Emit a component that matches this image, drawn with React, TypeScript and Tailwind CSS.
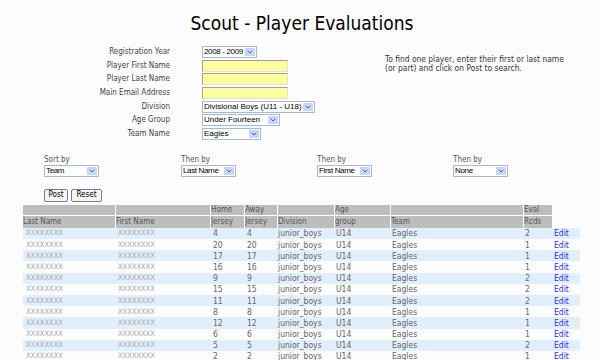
import { ChevronDown } from 'lucide-react'

const font = "font-['DejaVu_Sans_Condensed','DejaVu_Sans',sans-serif]"

function Select({ value, width, tight }: { value: string; width: string; tight?: boolean }) {
  return (
    <div className={`flex h-[12px] items-stretch border border-[#a5b9d5] bg-white ${width}`}>
      <span
        className={`flex-1 pl-[1px] font-['Liberation_Sans',Arial,sans-serif] text-[8px] leading-[10px] text-black whitespace-nowrap overflow-hidden ${tight ? 'tracking-[-0.35px]' : ''}`}
      >
        {value}
      </span>
      <span className="m-[1px] flex w-[10px] items-center justify-center bg-[#c6d6fb]">
        <ChevronDown size={8} strokeWidth={3} className="text-[#4d6185]" />
      </span>
    </div>
  )
}

function YellowInput() {
  return <div className="h-[12px] w-[86px] border border-[#a0a0a0] border-b-[#e0e0e0] border-r-[#e0e0e0] bg-[#fffd9e]" />
}

const formRows: { label: string; control: React.ReactNode }[] = [
  { label: 'Registration Year', control: <Select value="2008 - 2009" width="w-[55px]" tight /> },
  { label: 'Player First Name', control: <YellowInput /> },
  { label: 'Player Last Name', control: <YellowInput /> },
  { label: 'Main Email Address', control: <YellowInput /> },
  { label: 'Division', control: <Select value="Divisional Boys (U11 - U18)" width="w-[113px]" /> },
  { label: 'Age Group', control: <Select value="Under Fourteen" width="w-[78px]" /> },
  { label: 'Team Name', control: <Select value="Eagles" width="w-[59px]" /> },
]

const sorts = [
  { label: 'Sort by', value: 'Team', ml: 'ml-[44px]' },
  { label: 'Then by', value: 'Last Name', ml: 'ml-[82px]' },
  { label: 'Then by', value: 'First Name', ml: 'ml-[81px]' },
  { label: 'Then by', value: 'None', ml: 'ml-[81px]' },
]

const players = [
  [4, 2], [20, 1], [17, 1], [16, 1], [9, 2], [15, 2], [11, 2], [8, 1], [12, 1], [6, 1], [5, 2], [2, 1],
]

export default function App() {
  return (
    <div className={`h-[360px] w-[600px] overflow-hidden bg-[#fcfcfc] ${font}`}>
      <h1 className="pl-[4px] pt-[11px] text-center text-[19px] leading-[24px] text-black">Scout - Player Evaluations</h1>

      {/* Search form */}
      <div className="mt-[10px] flex">
        <div className="flex flex-col">
          {formRows.map((r) => (
            <div key={r.label} className="flex h-[13.7px] items-center">
              <span className="w-[171px] pr-[1px] text-right text-[8px] leading-[10px] text-[#444]">{r.label}</span>
              <span className="ml-[31px]">{r.control}</span>
            </div>
          ))}
        </div>
        <p className="ml-[70px] mt-[10px] w-[190px] text-[8.4px] leading-[9px] text-[#333]">
          To find one player, enter their first or last name (or part) and click on Post to search.
        </p>
      </div>

      {/* Sort options */}
      <div className="mt-[14px] flex">
        {sorts.map((s, i) => (
          <div key={i} className={`flex flex-col ${s.ml}`}>
            <span className="text-[8px] leading-[10px] text-[#555]">{s.label}</span>
            <Select value={s.value} width="w-[55px]" tight />
          </div>
        ))}
      </div>

      <div className="ml-[44px] mt-[12px] flex gap-[3px]">
        <button className="h-[13px] w-[24px] rounded-[2px] border border-[#6a7fa0] bg-[#f6f6f6] text-[8px] leading-[10px] text-black">Post</button>
        <button className="h-[13px] w-[31px] rounded-[2px] border border-[#6a7fa0] bg-[#f6f6f6] text-[8px] leading-[10px] text-black">Reset</button>
      </div>

      {/* Results table */}
      <table className="ml-[23px] mt-[3px] border-separate border-spacing-0 text-[8px] leading-[10px]">
        <thead className="text-[#555]">
          <tr className="h-[11px]">
            <th className="w-[93px] border-r border-b border-white bg-[#bdbdbd]" />
            <th className="w-[95px] border-r border-b border-white bg-[#bdbdbd]" />
            <th className="w-[34px] border-r border-b border-white bg-[#bdbdbd] text-left font-normal">Home</th>
            <th className="w-[33px] border-r border-b border-white bg-[#bdbdbd] text-left font-normal">Away</th>
            <th className="w-[57px] border-r border-b border-white bg-[#bdbdbd]" />
            <th className="w-[56px] border-r border-b border-white bg-[#bdbdbd] text-left font-normal">Age</th>
            <th className="w-[133px] border-r border-b border-white bg-[#bdbdbd]" />
            <th className="w-[28px] border-b border-white bg-[#bdbdbd] text-left font-normal">Eval</th>
            <th className="w-[28px]" />
          </tr>
          <tr className="h-[12px]">
            <th className="border-r border-white bg-[#bdbdbd] text-left font-normal">Last Name</th>
            <th className="border-r border-white bg-[#bdbdbd] text-left font-normal">First Name</th>
            <th className="border-r border-white bg-[#bdbdbd] text-left font-normal">Jersey</th>
            <th className="border-r border-white bg-[#bdbdbd] text-left font-normal">Jersey</th>
            <th className="border-r border-white bg-[#bdbdbd] text-left font-normal">Division</th>
            <th className="border-r border-white bg-[#bdbdbd] text-left font-normal">group</th>
            <th className="border-r border-white bg-[#bdbdbd] text-left font-normal">Team</th>
            <th className="bg-[#bdbdbd] text-left font-normal">Rcds</th>
            <th />
          </tr>
        </thead>
        <tbody className="text-[8.5px] text-[#666]">
          {players.map(([n, rcds], i) => (
            <tr key={n} className={`h-[11.2px] ${i % 2 === 0 ? 'bg-[#e1eefc]' : 'bg-transparent'}`}>
              <td className="pl-[3px] text-[7.5px] text-[#aaa]">XXXXXXXX</td>
              <td className="pl-[2px] text-[7.5px] text-[#aaa]">XXXXXXXX</td>
              <td className="pl-[2px]">{n}</td>
              <td className="pl-[2px]">{n}</td>
              <td>junior_boys</td>
              <td className="pl-[1px]">U14</td>
              <td className="pl-[1px]">Eagles</td>
              <td className="pl-[1px]">{rcds}</td>
              <td className="pl-[2px] text-[#2b2bf0]">Edit</td>
            </tr>
          ))}
        </tbody>
      </table>
    </div>
  )
}
